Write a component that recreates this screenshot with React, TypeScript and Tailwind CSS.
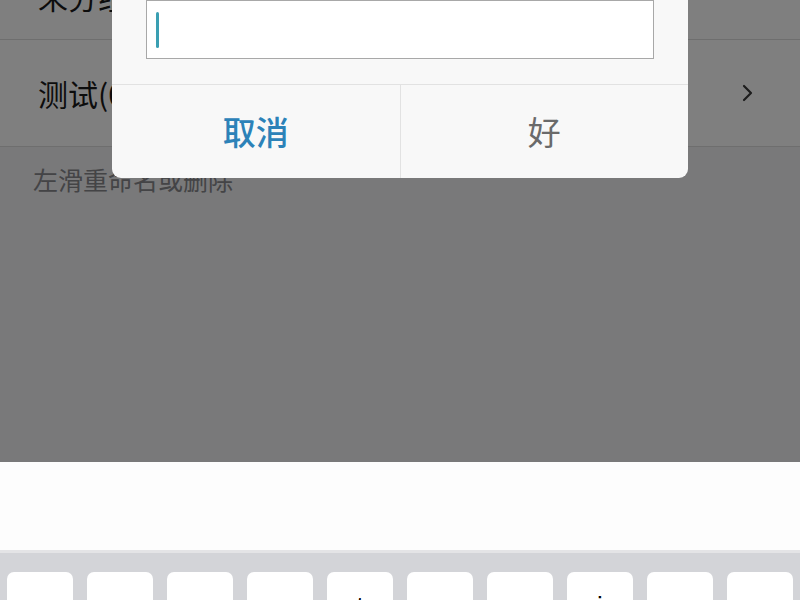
import React from "react";

const KEYS = ["q", "w", "e", "r", "t", "y", "u", "i", "o", "p"];

export default function App() {
  return (
    <div
      className="w-[800px] h-[600px] overflow-hidden flex flex-col bg-white"
      style={{ fontFamily: '"Noto Sans CJK SC", "Noto Sans", sans-serif' }}
    >
      {/* page area under the modal */}
      <div className="relative h-[462px] shrink-0 bg-[#f2f2f4] overflow-hidden">
        <div className="flex flex-col">
          <div className="h-[40px] bg-white border-b border-[#dcdcdc] pl-[38px] overflow-hidden">
            <div className="text-[30px] leading-none text-[#1a1a1a] -mt-[19px]">未分组</div>
          </div>
          <div className="h-[107px] bg-white border-b border-[#dcdcdc] flex items-center justify-between pl-[38px] pr-[46px]">
            <span className="text-[30px] leading-none text-[#1a1a1a]">测试(0)</span>
            <svg width="12" height="18" viewBox="0 0 12 18" fill="none">
              <path d="M2 2l7 7-7 7" stroke="#3a3a3a" strokeWidth="2.2" strokeLinecap="round" strokeLinejoin="round" />
            </svg>
          </div>
          <div className="pl-[33px] pt-[20px] text-[25px] leading-none text-[#88888c]">左滑重命名或删除</div>
        </div>

        {/* dim overlay */}
        <div className="absolute inset-0 bg-black/50" />

        {/* dialog */}
        <div className="absolute left-[112px] top-0 w-[576px] bg-[#f8f8f8] rounded-b-[9px] flex flex-col">
          <div className="px-[34px] pb-[25px]">
            <div className="h-[59px] bg-white border border-[#a8a8a8] flex items-center pl-[9px]">
              <div className="w-[3px] h-[36px] bg-[#3a9fb2] rounded-full" />
            </div>
          </div>
          <div className="h-[94px] border-t border-[#e2e2e2] flex">
            <button className="flex-1 flex items-center justify-center border-r border-[#e2e2e2] text-[33px] leading-none font-medium text-[#2c82b8]">
              取消
            </button>
            <button className="flex-1 flex items-center justify-center text-[33px] leading-none text-[#6a6a6a]">
              好
            </button>
          </div>
        </div>
      </div>

      {/* prediction bar */}
      <div className="h-[88px] shrink-0 bg-[#fdfdfd]" />

      {/* keyboard */}
      <div className="flex-1 bg-[#d3d4d8] border-t-[3px] border-[#e4e4e6] pt-[19px] px-[7px]">
        <div className="flex gap-[14px]">
          {KEYS.map((k) => (
            <div
              key={k}
              className="w-[66px] h-[84px] bg-white rounded-[7px] flex justify-center pt-[21px] text-[26px] leading-none text-black"
              style={{ fontFamily: '"Liberation Sans", sans-serif' }}
            >
              {k}
            </div>
          ))}
        </div>
      </div>
    </div>
  );
}
